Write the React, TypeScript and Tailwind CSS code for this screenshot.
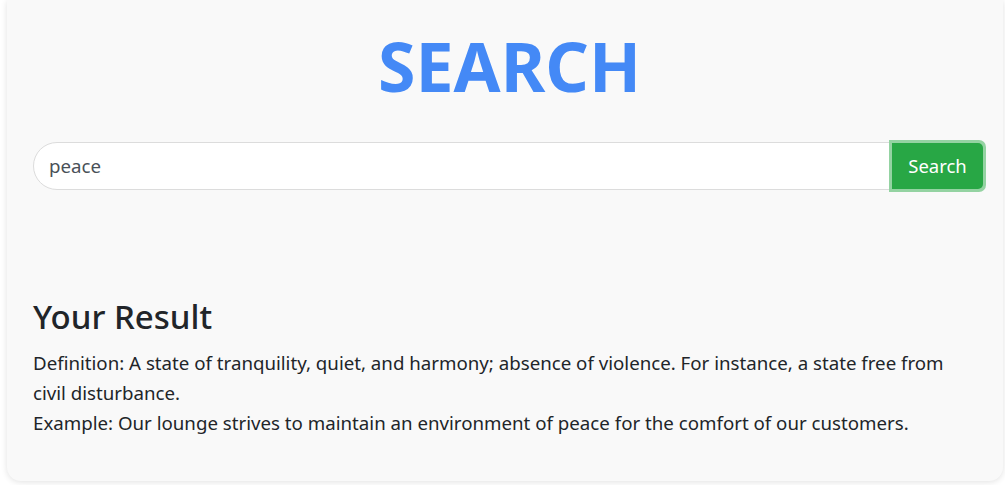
export default function App() {
  return (
    <div className="w-[1005px] h-[485px] bg-white overflow-hidden pl-[7px] pr-[2px]" style={{ fontFamily: '"Noto Sans", "Open Sans", sans-serif' }}>
      <div className="h-[481px] bg-[#f9f9f9] rounded-b-[14px] shadow-[0_1px_6px_rgba(0,0,0,0.12)] pl-[26px] pr-[17px] pt-[26px]">
        <h1 className="text-center text-[68px] leading-[80px] font-bold text-[#4489f6]">SEARCH</h1>
        <div className="mt-[36px] flex items-center h-[48px]">
          <div className="flex-1 h-[48px] bg-white border border-[#dcdcdc] rounded-l-[24px] flex items-center pl-[15px] text-[18.7px] text-[#495057]">peace</div>
          <div className="h-[52px] w-[97px] -ml-[1px] rounded-r-[7px] bg-[#94d3a2] p-[3px]">
            <div className="h-full w-full bg-[#28a745] rounded-r-[5px] flex items-center justify-center text-white text-[18.5px]">Search</div>
          </div>
        </div>
        <h2 className="mt-[107px] text-[33px] leading-[40px] font-medium text-[#212529]">Your Result</h2>
        <div className="mt-[11px] text-[18.7px] leading-[30px] text-[#212529] w-[930px]">
          <p>Definition: A state of tranquility, quiet, and harmony; absence of violence. For instance, a state free from civil disturbance.</p>
          <p>Example: Our lounge strives to maintain an environment of peace for the comfort of our customers.</p>
        </div>
      </div>
    </div>
  );
}
